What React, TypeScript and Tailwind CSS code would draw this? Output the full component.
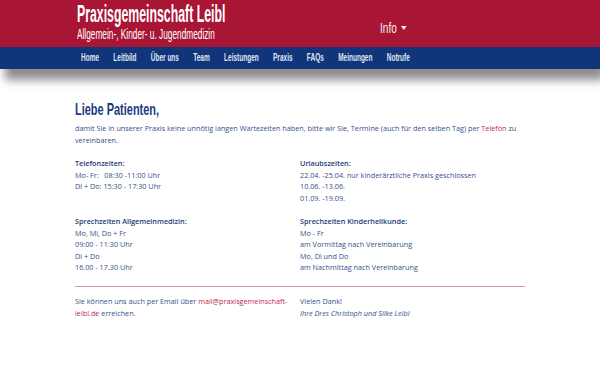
import React from "react";

const body = { fontFamily: '"Open Sans", "Liberation Sans", sans-serif' };
const cond = { fontFamily: '"Liberation Sans", "Arial", sans-serif' };

function Line({ children, bold }: { children?: React.ReactNode; bold?: boolean }) {
  return (
    <div className={bold ? "h-[11.6px] font-semibold text-[#1d3a78] whitespace-nowrap" : "h-[11.6px] whitespace-nowrap"}>
      {children ?? "\u00a0"}
    </div>
  );
}

export default function App() {
  const nav = ["Home", "Leitbild", "Über uns", "Team", "Leistungen", "Praxis", "FAQs", "Meinungen", "Notrufe"];
  return (
    <div className="w-[600px] h-[375px] bg-white overflow-hidden">
      <div className="shadow-[5px_11px_9px_rgba(0,0,0,0.45)] relative">
        <div className="bg-[#a81535] h-[47px] flex">
          <div className="pl-[77px] pt-[2px] w-[300px]" style={cond}>
            <div className="text-white font-bold text-[23px] leading-[24px] origin-left scale-x-[0.535] whitespace-nowrap">
              Praxisgemeinschaft Leibl
            </div>
            <div className="text-white text-[15.5px] leading-[16px] origin-left scale-x-[0.535] whitespace-nowrap">
              Allgemein-, Kinder- u. Jugendmedizin
            </div>
          </div>
          <div className="pl-[80px] pt-[20px] w-[60px]" style={cond}>
            <div className="flex items-start gap-[6px] origin-left scale-x-[0.72]">
              <span className="text-[#f6f0f2] text-[14px] leading-[16px]">Info</span>
              <span className="mt-[6px] w-0 h-0 border-l-[4px] border-r-[4px] border-t-[4px] border-l-transparent border-r-transparent border-t-[#f6f0f2]" />
            </div>
          </div>
        </div>
        <div className="bg-[#10357a] h-[22px] flex items-center pl-[81px]" style={cond}>
          <div className="flex items-center gap-[22px] origin-left scale-x-[0.65]">
            {nav.map((n) => (
              <span key={n} className="text-[#dfe6f2] font-bold text-[10px] leading-[12px] whitespace-nowrap">
                {n}
              </span>
            ))}
          </div>
        </div>
      </div>

      <div className="px-[75px] pt-[32px] text-[#34508c] text-[7.25px] leading-[11.6px]" style={body}>
        <div className="text-[#1d3a82] font-bold text-[17px] leading-[18px] origin-left scale-x-[0.645] whitespace-nowrap" style={cond}>
          Liebe Patienten,
        </div>
        <p className="mt-[3px] leading-[12px] w-[450px]">
          damit Sie in unserer Praxis keine unnötig langen Wartezeiten haben, bitte wir Sie, Termine (auch für den selben Tag) per <span className="text-[#c0284a]">Telefon</span> zu vereinbaren.
        </p>
        <div className="mt-[12px] grid grid-cols-2 w-[450px]">
          <div>
            <Line bold>Telefonzeiten:</Line>
            <Line>Mo- Fr:&nbsp;&nbsp; 08:30 -11:00 Uhr</Line>
            <Line>Di + Do: 15:30 - 17:30 Uhr</Line>
            <Line />
            <Line />
            <Line bold>Sprechzeiten Allgemeinmedizin:</Line>
            <Line>Mo, Mi, Do + Fr</Line>
            <Line>09:00 - 11:30 Uhr</Line>
            <Line>Di + Do</Line>
            <Line>16.00 - 17.30 Uhr</Line>
          </div>
          <div>
            <Line bold>Urlaubszeiten:</Line>
            <Line>22.04. -25.04. nur kinderärztliche Praxis geschlossen</Line>
            <Line>10.06. -13.06.</Line>
            <Line>01.09. -19.09.</Line>
            <Line />
            <Line bold>Sprechzeiten Kinderheilkunde:</Line>
            <Line>Mo - Fr</Line>
            <Line>am Vormittag nach Vereinbarung</Line>
            <Line>Mo, Di und Do</Line>
            <Line>am Nachmittag nach Vereinbarung</Line>
          </div>
        </div>
        <div className="mt-[12px] w-[450px] h-px bg-[#e4909f]" />
        <div className="mt-[8px] grid grid-cols-2 w-[450px] leading-[12px]">
          <div className="pr-[6px]">
            Sie können uns auch per Email über <span className="text-[#c0284a]">mail@praxisgemeinschaft-leibl.de</span> erreichen.
          </div>
          <div>
            <div>Vielen Dank!</div>
            <div className="italic">Ihre Dres Christoph und Silke Leibl</div>
          </div>
        </div>
      </div>
    </div>
  );
}
